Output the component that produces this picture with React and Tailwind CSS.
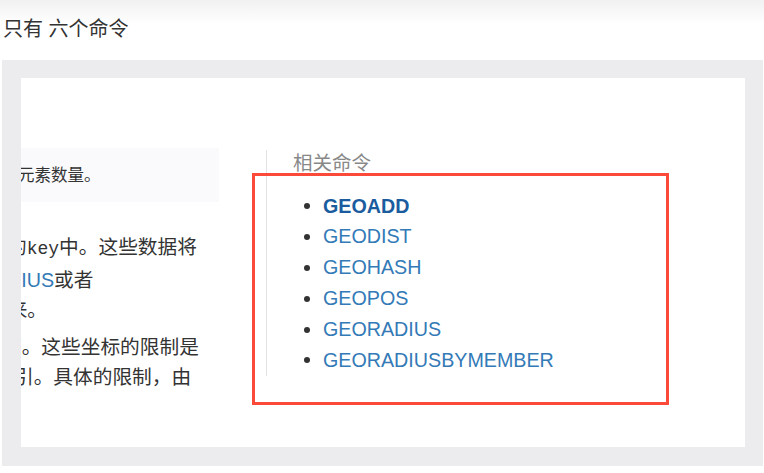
const links = [
  "GEOADD",
  "GEODIST",
  "GEOHASH",
  "GEOPOS",
  "GEORADIUS",
  "GEORADIUSBYMEMBER",
];

const App = () => {
  return (
    <div className="w-[764px] h-[473px] overflow-hidden bg-white text-[#333] font-['Liberation_Sans','Noto_Sans_CJK_SC',sans-serif]">
      {/* Title */}
      <div className="h-[60px] pl-[3px] pt-[15px] bg-linear-to-b from-[#f1f1f1] to-white to-40%">
        <p className="text-[20px] leading-[28px]">只有 六个命令</p>
      </div>

      {/* Screenshot frame */}
      <div className="ml-[2px] mr-[1px] h-[406px] bg-[#ececee] pl-[19px] pr-[18px] pt-[18px]">
        <div className="relative flex h-[369px] bg-white">
          {/* Left (cut-off) doc text */}
          <div className="w-[198px] shrink-0 overflow-hidden pt-[70px] text-[19.7px] leading-[30.5px]">
            <div className="h-[54px] bg-[#fafafc] flex items-center">
              <span className="-ml-[36px] whitespace-nowrap text-[16.5px]">中的元素数量。</span>
            </div>

            <div className="mt-[30px]">
              <div className="-ml-[14px] whitespace-nowrap">
                的<span className="font-['Liberation_Mono',monospace] text-[18px]">key</span>中。这些数据将
              </div>
              <div className="-ml-[14px] whitespace-nowrap">
                <span className="text-[#337ab7]">DIUS</span>或者
              </div>
              <div className="-ml-[33px] whitespace-nowrap">式来。</div>
            </div>

            <div className="mt-[6px]">
              <div className="-ml-[19px] whitespace-nowrap">度。这些坐标的限制是</div>
              <div className="-ml-[7px] whitespace-nowrap">引。具体的限制，由</div>
            </div>
          </div>

          {/* Related commands */}
          <div className="ml-[47px] mt-[72px] h-[226px] border-l border-[#e2e2e2] pl-[26px]">
            <p className="text-[19.5px] leading-[26px] text-[#888]">相关命令</p>
            <ul className="mt-[15px]">
              {links.map((name, i) => (
                <li key={name} className="flex items-center h-[30.8px]">
                  <span className="ml-[11px] w-[6px] h-[6px] rounded-full bg-[#333]" />
                  <a
                    href="#"
                    className={`ml-[13px] text-[19.7px] ${
                      i === 0 ? "font-bold text-[#1a5c9e]" : "text-[#337ab7]"
                    }`}
                  >
                    {name}
                  </a>
                </li>
              ))}
            </ul>
          </div>

          {/* Red highlight annotation */}
          <div className="absolute left-[231px] top-[95px] w-[417px] h-[232px] border-[3px] border-[#fb4a3a] pointer-events-none" />
        </div>
      </div>
    </div>
  );
};

export default App;
